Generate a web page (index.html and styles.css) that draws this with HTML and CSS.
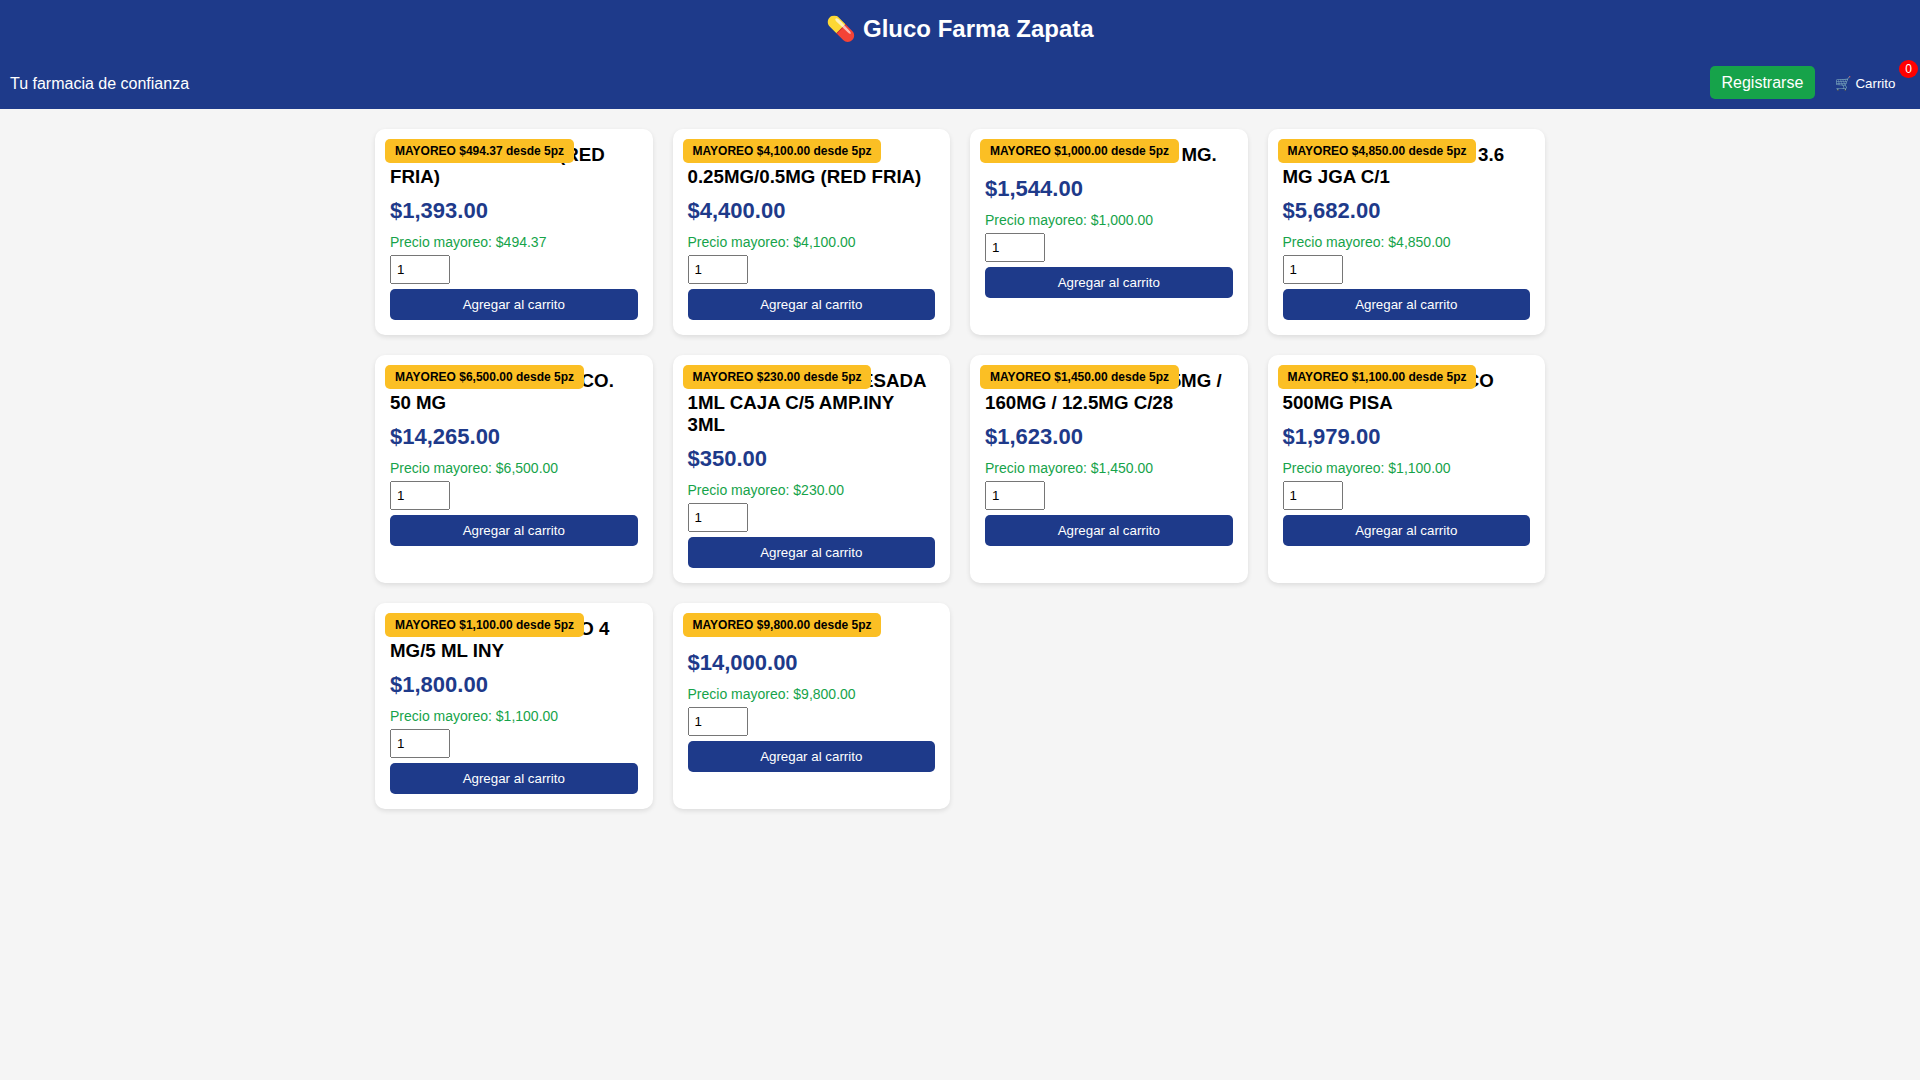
FILE: index.html
```html
<!DOCTYPE html>
<html lang="es">
<head>
<meta charset="UTF-8">
<title>Gluco Farma Zapata</title>
<link rel="stylesheet" href="styles.css">
</head>
<body>
<header class="header">
  <h1 class="brand">💊 Gluco Farma Zapata</h1>
  <div class="topbar">
    <div class="tagline">Tu farmacia de confianza</div>
    <div class="actions">
      <a class="register">Registrarse</a>
      <button class="cart">🛒 Carrito<span class="count">0</span></button>
    </div>
  </div>
</header>
<main class="products">
  <article class="card">
    <span class="badge">MAYOREO $494.37 desde 5pz</span>
    <h3 class="title t1">(RED<br>FRIA)</h3>
    <div class="price">$1,393.00</div>
    <div class="wholesale">Precio mayoreo: $494.37</div>
    <input class="qty" type="number" value="1">
    <button class="add">Agregar al carrito</button>
  </article>
  <article class="card">
    <span class="badge">MAYOREO $4,100.00 desde 5pz</span>
    <h3 class="title">&nbsp;<br>0.25MG/0.5MG (RED FRIA)</h3>
    <div class="price">$4,400.00</div>
    <div class="wholesale">Precio mayoreo: $4,100.00</div>
    <input class="qty" type="number" value="1">
    <button class="add">Agregar al carrito</button>
  </article>
  <article class="card">
    <span class="badge">MAYOREO $1,000.00 desde 5pz</span>
    <h3 class="title t3">MG.</h3>
    <div class="price">$1,544.00</div>
    <div class="wholesale">Precio mayoreo: $1,000.00</div>
    <input class="qty" type="number" value="1">
    <button class="add">Agregar al carrito</button>
  </article>
  <article class="card">
    <span class="badge">MAYOREO $4,850.00 desde 5pz</span>
    <h3 class="title t4">3.6<br>MG JGA C/1</h3>
    <div class="price">$5,682.00</div>
    <div class="wholesale">Precio mayoreo: $4,850.00</div>
    <input class="qty" type="number" value="1">
    <button class="add">Agregar al carrito</button>
  </article>
  <article class="card">
    <span class="badge">MAYOREO $6,500.00 desde 5pz</span>
    <h3 class="title t5">CO.<br>50 MG</h3>
    <div class="price">$14,265.00</div>
    <div class="wholesale">Precio mayoreo: $6,500.00</div>
    <input class="qty" type="number" value="1">
    <button class="add">Agregar al carrito</button>
  </article>
  <article class="card">
    <span class="badge">MAYOREO $230.00 desde 5pz</span>
    <h3 class="title t6">ESADA<br>1ML CAJA C/5 AMP.INY<br>3ML</h3>
    <div class="price">$350.00</div>
    <div class="wholesale">Precio mayoreo: $230.00</div>
    <input class="qty" type="number" value="1">
    <button class="add">Agregar al carrito</button>
  </article>
  <article class="card">
    <span class="badge">MAYOREO $1,450.00 desde 5pz</span>
    <h3 class="title t7">5MG /<br>160MG / 12.5MG C/28</h3>
    <div class="price">$1,623.00</div>
    <div class="wholesale">Precio mayoreo: $1,450.00</div>
    <input class="qty" type="number" value="1">
    <button class="add">Agregar al carrito</button>
  </article>
  <article class="card">
    <span class="badge">MAYOREO $1,100.00 desde 5pz</span>
    <h3 class="title t8">CO<br>500MG PISA</h3>
    <div class="price">$1,979.00</div>
    <div class="wholesale">Precio mayoreo: $1,100.00</div>
    <input class="qty" type="number" value="1">
    <button class="add">Agregar al carrito</button>
  </article>
  <article class="card">
    <span class="badge">MAYOREO $1,100.00 desde 5pz</span>
    <h3 class="title t9">O 4<br>MG/5 ML INY</h3>
    <div class="price">$1,800.00</div>
    <div class="wholesale">Precio mayoreo: $1,100.00</div>
    <input class="qty" type="number" value="1">
    <button class="add">Agregar al carrito</button>
  </article>
  <article class="card">
    <span class="badge">MAYOREO $9,800.00 desde 5pz</span>
    <h3 class="title">&nbsp;</h3>
    <div class="price">$14,000.00</div>
    <div class="wholesale">Precio mayoreo: $9,800.00</div>
    <input class="qty" type="number" value="1">
    <button class="add">Agregar al carrito</button>
  </article>
</main>
</body>
</html>
```
FILE: styles.css
```css
* { box-sizing: border-box; }
body {
  margin: 0;
  background: #f5f5f5;
  color: #000;
  font-family: Arial, "Liberation Sans", sans-serif;
  font-size: 16px;
}
.header {
  height: 109px;
  background: #1e3a8a;
  color: #fff;
}
.brand {
  margin: 0;
  padding: 15px 0 14px;
  font-size: 24px;
  line-height: 27px;
  text-align: center;
}
.topbar {
  display: flex;
  justify-content: space-between;
  align-items: center;
  height: 53px;
  padding: 0 10px;
}
.topbar > div { line-height: 18px; }
.tagline { padding-top: 2px; }
.actions {
  display: flex;
  align-items: center;
  gap: 4.4px;
}
.register {
  padding: 8px 12px;
  border-radius: 5px;
  background: #16a34a;
  line-height: 17px;
}
.cart {
  position: relative;
  margin-top: 2px;
  padding: 8px 14.6px 8px 15px;
  border: 0;
  background: transparent;
  color: #fff;
  font: 13.333px Arial, "Liberation Sans", sans-serif;
}
.count {
  position: absolute;
  top: -8px;
  right: -8px;
  padding: 2px 6px;
  border-radius: 50%;
  background: red;
  font-size: 12px;
  line-height: 14px;
}
.products {
  display: grid;
  grid-template-columns: repeat(4, 1fr);
  gap: 20px;
  width: 1170px;
  margin: 20px auto;
}
.card {
  position: relative;
  padding: 15px;
  border-radius: 10px;
  background: #fff;
  box-shadow: 0 2px 5px rgba(0, 0, 0, 0.1);
}
.badge {
  position: absolute;
  top: 10px;
  left: 10px;
  padding: 5px 10px;
  border-radius: 5px;
  background: #fbbf24;
  font-size: 12px;
  font-weight: bold;
  line-height: 14px;
}
.title {
  margin: 0 0 10px;
  font-size: 18.72px;
  line-height: 22px;
}
/* The badge covers the start of the first line. */
.t1 { text-indent: 169.1px; }
.t3 { text-indent: 196.4px; }
.t4 { text-indent: 195.6px; }
.t5 { text-indent: 190.6px; }
.t6 { text-indent: 173.6px; }
.t7 { text-indent: 185.7px; }
.t8 { text-indent: 183.2px; }
.t9 { text-indent: 189.3px; }
.price {
  margin-bottom: 11px;
  color: #1e3a8a;
  font-size: 22px;
  font-weight: bold;
  line-height: 25px;
}
.wholesale {
  color: #16a34a;
  font-size: 14px;
  line-height: 16px;
}
.qty {
  display: block;
  width: 60px;
  height: 29px;
  margin: 5px 0;
  padding: 5px;
  font: 13.333px Arial, "Liberation Sans", sans-serif;
}
.add {
  display: block;
  width: 100%;
  height: 31px;
  border: 0;
  border-radius: 5px;
  background: #1e3a8a;
  color: #fff;
  font: 13.333px Arial, "Liberation Sans", sans-serif;
}
```
